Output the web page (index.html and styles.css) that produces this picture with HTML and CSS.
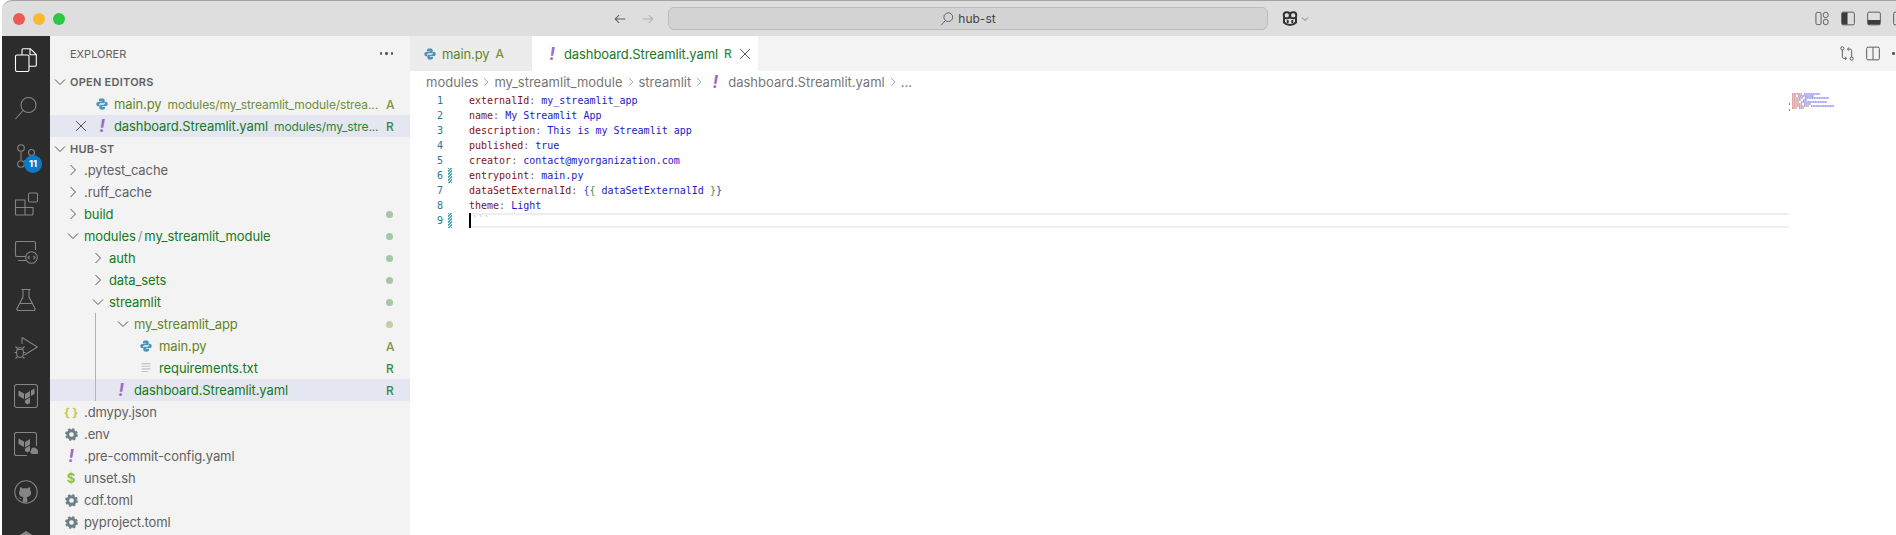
FILE: index.html
```html
<!DOCTYPE html>
<html lang="en">
<head>
<meta charset="utf-8">
<title>hub-st</title>
<link rel="stylesheet" href="styles.css">
</head>
<body>
<div class="window">
  <header class="titlebar">
    <div class="lights"><i class="light red"></i><i class="light yellow"></i><i class="light green"></i></div>
    <div class="nav">
      <svg class="navicon" viewBox="0 0 16 16"><path d="M14 8H2.500M7 3.500 2.500 8 7 12.500"/></svg>
      <svg class="navicon off" viewBox="0 0 16 16"><path d="M2 8h11.500M9 3.500 13.500 8 9 12.500"/></svg>
    </div>
    <div class="command">
      <svg class="cmdicon" viewBox="0 0 16 16"><circle cx="9.500" cy="6.500" r="5"/><path d="M6 10.500 1.500 15.500"/></svg>
      <span>hub-st</span>
    </div>
    <div class="copilot">
      <svg class="copicon" viewBox="0 0 18 18"><path d="M3 7.500v5c1.500 1.500 3.500 2.500 6 2.500s4.500-1 6-2.500v-5"/><rect x="2.800" y="2.200" width="6" height="6" rx="2.500"/><rect x="9.200" y="2.200" width="6" height="6" rx="2.500"/><rect class="eye" x="5.700" y="10" width="2" height="3.200" rx=".8"/><rect class="eye" x="10.300" y="10" width="2" height="3.200" rx=".8"/></svg>
      <svg class="copchev" viewBox="0 0 8 8"><path d="M1 2.500 4 5.500 7 2.500"/></svg>
    </div>
    <div class="layout-actions">
      <svg class="laicon" viewBox="0 0 15 15"><rect x="1" y="1" width="5.500" height="13" rx="1.500"/><rect x="9" y="1" width="5" height="5.500" rx="2"/><rect x="9" y="8.500" width="5" height="5.500" rx="2"/></svg>
      <svg class="laicon" viewBox="0 0 15 15"><rect x=".7" y=".7" width="13.600" height="13.600" rx="1.500"/><path class="solid" d="M1 2.200C1 1.500 1.500 1 2.200 1H7v13H2.200C1.500 14 1 13.500 1 12.800z"/></svg>
      <svg class="laicon" viewBox="0 0 15 15"><rect x=".7" y=".7" width="13.600" height="13.600" rx="1.500"/><path class="solid" d="M1 9h13v3.800c0 .7-.5 1.200-1.200 1.200H2.200C1.500 14 1 13.500 1 12.800z"/></svg>
      <svg class="laicon" viewBox="0 0 15 15"><rect x=".7" y=".7" width="13.600" height="13.600" rx="1.500"/></svg>
    </div>
  </header>

  <div class="workbench">
    <nav class="activity">
      <div class="act">
        <svg class="acticon active" viewBox="0 0 24 24"><rect x="1.500" y="7" width="13.500" height="16.500" rx="1.500"/><path d="M8 7V2c0-.8.500-1.300 1.300-1.300h7L22.300 6.500V17c0 .8-.5 1.300-1.300 1.300h-6M16 1v5.800h6"/></svg>
      </div>
      <div class="act">
        <svg class="acticon" viewBox="0 0 24 24"><circle cx="14.500" cy="9" r="7.500"/><path d="M9 14.500 1.500 23"/></svg>
      </div>
      <div class="act">
        <svg class="acticon" viewBox="0 0 24 24"><circle cx="7" cy="4" r="3.300"/><circle cx="17.500" cy="8.500" r="3"/><circle cx="7" cy="20" r="3.300"/><path d="M7 7.500v9M17.500 11.500c0 5-7 4-8 6.500"/></svg>
        <span class="badge">11</span>
      </div>
      <div class="act">
        <svg class="acticon" viewBox="0 0 24 24"><path d="M1.500 8h9.500v15H2.500a1 1 0 0 1-1-1zM1.500 15.500H19V22a1 1 0 0 1-1 1h-7"/><rect x="14.500" y="1" width="9" height="9" rx="1.500"/></svg>
      </div>
      <div class="act">
        <svg class="acticon" viewBox="0 0 24 24"><path d="M12 16.500H3a1.500 1.500 0 0 1-1.500-1.500V3A1.500 1.500 0 0 1 3 1.500h17A1.500 1.500 0 0 1 21.500 3v7M4 20.500h8"/><circle cx="17.500" cy="17.500" r="5.800"/><path d="M15.500 16l-1.500 1.500 1.500 1.500M19.500 16l1.500 1.500-1.500 1.500"/></svg>
      </div>
      <div class="act">
        <svg class="acticon" viewBox="0 0 24 24"><path d="M7.500 1.500h9M9 1.500V9L3 20.500c-.5 1 .2 2 1.300 2h15.400c1.100 0 1.800-1 1.300-2L15 9V1.500M6 15.500h12"/></svg>
      </div>
      <div class="act">
        <svg class="acticon" viewBox="0 0 24 24"><path d="M8 1.500 23.500 11 10.500 19M8 1.500V8"/><ellipse cx="6" cy="16.500" rx="3.500" ry="5"/><path d="M2.500 16.500H.5M9.500 16.500h2M3.500 12.500 1.500 10.500M8.500 12.500l2-2M3.500 20.500l-2 2M8.500 20.500l2 2M3 13.500h6"/></svg>
      </div>
      <div class="act">
        <svg class="acticon" viewBox="0 0 24 24"><rect x=".5" y=".5" width="23" height="23" rx="2.500"/><path class="fillgray" d="M4.500 6.500 10 9.500v5.500L4.500 12zM11 10l5-3v5.500l-5 3zM11 16.500l5-3v5.500l-2.500 1.500-2.500-1.500zM17 6.500l3.500-2v5.500L17 12z"/></svg>
      </div>
      <div class="act">
        <svg class="acticon" viewBox="0 0 24 24"><path d="M22.500 14V2.500a2 2 0 0 0-2-2H2.500a2 2 0 0 0-2 2v19a2 2 0 0 0 2 2H13"/><path class="fillgray" d="M4.500 6.500 10 9.500v5.500L4.500 12zM11 10l5-3v5.500l-5 3zM11 16.500l5-3v5.500l-2.500 1.500-2.500-1.500zM17 18.500a3 3 0 0 1 3-3 3 3 0 0 1 3 2 2.500 2.500 0 0 1 .5 4.500H18a2 2 0 0 1-1-3.500z"/></svg>
      </div>
      <div class="act">
        <svg class="acticon" viewBox="0 0 24 24"><circle cx="12" cy="12" r="11.200"/><path class="fillgray" d="M8.800 22.500v-3.600c-2.600.5-3.400-.9-3.900-2 .8.200 1.500.9 2 1.500.6.600 1.300.6 2 .3 0-.6.300-1.100.7-1.500-2.800-.4-4.600-1.700-4.600-4.500 0-1.100.4-2 1-2.800-.2-.7-.2-1.700.1-2.600 1.100 0 2 .5 2.900 1.200 1.300-.4 2.800-.4 4.100 0 .9-.7 1.800-1.200 2.900-1.200.3.900.3 1.900.1 2.600.6.800 1 1.700 1 2.800 0 2.800-1.800 4.100-4.600 4.500.5.500.8 1.100.8 1.900v3.400z"/></svg>
      </div>
      <div class="act">
        <svg class="acticon" viewBox="0 0 24 24"><path class="fillgray" d="M4 8l8-5 8 5v13H4z"/></svg>
      </div>
    </nav>

    <aside class="sidebar">
      <div class="side-head">
        <span class="side-title">EXPLORER</span>
        <span class="dots"><i></i><i></i><i></i></span>
      </div>
      <div class="section">
        <svg class="chev open" viewBox="0 0 16 16"><path d="M3 5.500 8 10.500 13 5.500"/></svg>
        <span>OPEN EDITORS</span>
      </div>
      <div class="row oe">
        <span class="closebox"></span>
        <span class="ficon oeicon"><svg class="py" viewBox="0 0 16 16"><path d="M8 1.500C5.500 1.500 4.500 2.500 4.500 3.800V5h3.700v.6H3.500C2.200 5.600 1.500 6.700 1.500 8s.7 2.500 2 2.500h1.300V9c0-1 .8-1.800 1.800-1.800h3c.9 0 1.500-.7 1.500-1.500V3.800c0-1.300-1.200-2.300-3.500-2.300z"/><path d="M8 14.500c2.500 0 3.500-1 3.500-2.300V11H7.800v-.6h4.700c1.300 0 2-1.100 2-2.400s-.7-2.500-2-2.500h-1.300V7c0 1-.8 1.800-1.800 1.800h-3c-.9 0-1.500.7-1.500 1.500v1.900c0 1.300 1.200 2.300 3.500 2.300z"/></svg></span>
        <span class="name added">main.py</span>
        <span class="desc added">modules/my_streamlit_module/strea...</span>
        <span class="git added">A</span>
      </div>
      <div class="row oe selected">
        <span class="closebox"><svg class="closex" viewBox="0 0 16 16"><path d="M3 3l10 10M13 3 3 13"/></svg></span>
        <span class="ficon oeicon bang">!</span>
        <span class="name renamed">dashboard.Streamlit.yaml</span>
        <span class="desc renamed">modules/my_stre...</span>
        <span class="git renamed">R</span>
      </div>
      <div class="section hub">
        <svg class="chev open" viewBox="0 0 16 16"><path d="M3 5.500 8 10.500 13 5.500"/></svg>
        <span>HUB-ST</span>
      </div>
      <div class="row l0"><svg class="chev" viewBox="0 0 16 16"><path d="M5.500 3 10.500 8 5.500 13"/></svg><span class="name">.pytest_cache</span></div>
      <div class="row l0"><svg class="chev" viewBox="0 0 16 16"><path d="M5.500 3 10.500 8 5.500 13"/></svg><span class="name">.ruff_cache</span></div>
      <div class="row l0"><svg class="chev" viewBox="0 0 16 16"><path d="M5.500 3 10.500 8 5.500 13"/></svg><span class="name renamed">build</span><i class="dot"></i></div>
      <div class="row l0"><svg class="chev" viewBox="0 0 16 16"><path d="M3 5.500 8 10.500 13 5.500"/></svg><span class="name renamed">modules<span class="sep">/</span>my_streamlit_module</span><i class="dot"></i></div>
      <div class="row l1"><svg class="chev" viewBox="0 0 16 16"><path d="M5.500 3 10.500 8 5.500 13"/></svg><span class="name renamed">auth</span><i class="dot"></i></div>
      <div class="row l1"><svg class="chev" viewBox="0 0 16 16"><path d="M5.500 3 10.500 8 5.500 13"/></svg><span class="name renamed">data_sets</span><i class="dot"></i></div>
      <div class="row l1"><svg class="chev" viewBox="0 0 16 16"><path d="M3 5.500 8 10.500 13 5.500"/></svg><span class="name renamed">streamlit</span><i class="dot"></i></div>
      <div class="group">
        <i class="guide"></i>
        <div class="row l2"><svg class="chev" viewBox="0 0 16 16"><path d="M3 5.500 8 10.500 13 5.500"/></svg><span class="name added">my_streamlit_app</span><i class="dot dot-added"></i></div>
        <div class="row l3"><span class="ficon"><svg class="py" viewBox="0 0 16 16"><path d="M8 1.500C5.500 1.500 4.500 2.500 4.500 3.800V5h3.700v.6H3.500C2.200 5.600 1.500 6.700 1.500 8s.7 2.500 2 2.500h1.300V9c0-1 .8-1.800 1.800-1.800h3c.9 0 1.500-.7 1.500-1.500V3.800c0-1.300-1.200-2.300-3.500-2.300z"/><path d="M8 14.500c2.500 0 3.500-1 3.500-2.300V11H7.800v-.6h4.700c1.300 0 2-1.100 2-2.400s-.7-2.500-2-2.500h-1.300V7c0 1-.8 1.800-1.800 1.800h-3c-.9 0-1.500.7-1.500 1.500v1.900c0 1.300 1.200 2.300 3.500 2.300z"/></svg></span><span class="name added">main.py</span><span class="git added">A</span></div>
        <div class="row l3"><span class="ficon"><svg class="txt" viewBox="0 0 16 16"><path d="M3 3h10M3 6h10M3 9h10M3 12h7"/></svg></span><span class="name renamed">requirements.txt</span><span class="git renamed">R</span></div>
        <div class="row l2 selected"><span class="ficon bang">!</span><span class="name renamed">dashboard.Streamlit.yaml</span><span class="git renamed">R</span></div>
      </div>
      <div class="row l0"><span class="ficon braces">{ }</span><span class="name">.dmypy.json</span></div>
      <div class="row l0"><span class="ficon"><svg class="gear" viewBox="0 0 16 16"><circle class="ring" cx="8" cy="8" r="4"/><circle class="teeth" cx="8" cy="8" r="5.800"/></svg></span><span class="name">.env</span></div>
      <div class="row l0"><span class="ficon bang">!</span><span class="name">.pre-commit-config.yaml</span></div>
      <div class="row l0"><span class="ficon dollar">$</span><span class="name">unset.sh</span></div>
      <div class="row l0"><span class="ficon"><svg class="gear" viewBox="0 0 16 16"><circle class="ring" cx="8" cy="8" r="4"/><circle class="teeth" cx="8" cy="8" r="5.800"/></svg></span><span class="name">cdf.toml</span></div>
      <div class="row l0"><span class="ficon"><svg class="gear" viewBox="0 0 16 16"><circle class="ring" cx="8" cy="8" r="4"/><circle class="teeth" cx="8" cy="8" r="5.800"/></svg></span><span class="name">pyproject.toml</span></div>
    </aside>

    <main class="editor">
      <div class="tabs">
        <div class="tab inactive">
          <span class="ficon"><svg class="py" viewBox="0 0 16 16"><path d="M8 1.500C5.500 1.500 4.500 2.500 4.500 3.800V5h3.700v.6H3.500C2.200 5.600 1.500 6.700 1.500 8s.7 2.500 2 2.500h1.300V9c0-1 .8-1.800 1.800-1.800h3c.9 0 1.500-.7 1.500-1.500V3.800c0-1.300-1.200-2.300-3.500-2.300z"/><path d="M8 14.500c2.500 0 3.500-1 3.500-2.300V11H7.800v-.6h4.700c1.300 0 2-1.100 2-2.400s-.7-2.500-2-2.500h-1.300V7c0 1-.8 1.800-1.800 1.800h-3c-.9 0-1.500.7-1.500 1.500v1.900c0 1.300 1.200 2.300 3.500 2.300z"/></svg></span>
          <span class="name added">main.py</span>
          <span class="tabgit added">A</span>
        </div>
        <div class="tab current">
          <span class="ficon bang">!</span>
          <span class="name renamed">dashboard.Streamlit.yaml</span>
          <span class="tabgit renamed">R</span>
          <svg class="closex tabx" viewBox="0 0 16 16"><path d="M3 3l10 10M13 3 3 13"/></svg>
        </div>
        <div class="tab-actions">
          <svg class="taicon" viewBox="0 0 15 15"><circle cx="2.500" cy="2" r="1.700"/><circle cx="12.500" cy="13" r="1.700"/><path d="M2.500 3.700V11c0 1 .5 1.700 1.700 1.700h2.300M5.500 11l1.500 1.700L5.500 14.400M12.500 11.300V4.500c0-1-.5-1.700-1.700-1.700H8.500M9.500 1l-1.500 1.800 1.500 1.700"/></svg>
          <svg class="taicon" viewBox="0 0 15 15"><rect x=".7" y=".7" width="13.600" height="13.600" rx="1.500"/><path d="M7.500 1v13"/></svg>
          <span class="dots"><i></i><i></i><i></i></span>
        </div>
      </div>
      <div class="crumbs">
        <span>modules</span><svg class="crumbchev" viewBox="0 0 16 16"><path d="M5.500 3 10.500 8 5.500 13"/></svg>
        <span>my_streamlit_module</span><svg class="crumbchev" viewBox="0 0 16 16"><path d="M5.500 3 10.500 8 5.500 13"/></svg>
        <span>streamlit</span><svg class="crumbchev" viewBox="0 0 16 16"><path d="M5.500 3 10.500 8 5.500 13"/></svg>
        <span class="ficon bang crumbbang">!</span>
        <span>dashboard.Streamlit.yaml</span><svg class="crumbchev" viewBox="0 0 16 16"><path d="M5.500 3 10.500 8 5.500 13"/></svg>
        <span>...</span>
      </div>
      <div class="code-area">
        <div class="code">
          <div class="line"><span class="num">1</span><span class="deco"></span><span class="src"><b class="k">externalId</b>: <b class="v">my_streamlit_app</b></span></div>
          <div class="line"><span class="num">2</span><span class="deco"></span><span class="src"><b class="k">name</b>: <b class="v">My Streamlit App</b></span></div>
          <div class="line"><span class="num">3</span><span class="deco"></span><span class="src"><b class="k">description</b>: <b class="v">This is my Streamlit app</b></span></div>
          <div class="line"><span class="num">4</span><span class="deco"></span><span class="src"><b class="k">published</b>: <b class="v">true</b></span></div>
          <div class="line"><span class="num">5</span><span class="deco"></span><span class="src"><b class="k">creator</b>: <b class="v">contact@myorganization.com</b></span></div>
          <div class="line"><span class="num">6</span><span class="deco mod"></span><span class="src"><b class="k">entrypoint</b>: <b class="v">main.py</b></span></div>
          <div class="line"><span class="num">7</span><span class="deco"></span><span class="src"><b class="k">dataSetExternalId</b>: <b class="b1">{</b><b class="b2">{</b> <b class="v">dataSetExternalId</b> <b class="b2">}</b><b class="b1">}</b></span></div>
          <div class="line"><span class="num">8</span><span class="deco"></span><span class="src"><b class="k">theme</b>: <b class="v">Light</b></span></div>
          <div class="line"><span class="num">9</span><span class="deco mod"></span><span class="src current-line"><i class="cursor"></i><b class="ghost">```</b></span></div>
        </div>
        <svg class="minimap" width="48" height="20" viewBox="0 0 48 20">
          <path class="mk" d="M3 1h10M3 3h4M3 5h11M3 7h9M3 9h7M3 11h10M3 13h17M3 15h5"/>
          <path class="mv" d="M15 1h16M9 3h16M16 5h24M14 7h4M12 9h26M15 11h7M22 13h23M10 15h5"/>
          <path class="md" d="M.5 10v2M.5 16v2"/>
        </svg>
      </div>
    </main>
  </div>
</div>
</body>
</html>
```
FILE: styles.css
```css
* { box-sizing: border-box; }
html, body { margin: 0; height: 100%; }
body {
  width: 1896px;
  height: 535px;
  overflow: hidden;
  background: #fff;
  font-family: "Inter", "Liberation Sans", sans-serif;
  font-size: 13px;
  color: #616161;
}
svg { display: block; flex: none; }
.window {
  margin-left: 2px;
  height: 535px;
  display: flex;
  flex-direction: column;
  overflow: hidden;
}

/* title bar */
.titlebar {
  height: 36px;
  flex: none;
  display: flex;
  align-items: center;
  background: #dedede;
  border-top: 1px solid #a3a3a3;
  border-top-left-radius: 10px;
  padding-left: 11px;
}
.lights { display: flex; gap: 8px; width: 599px; flex: none; }
.light { width: 12px; height: 12px; border-radius: 50%; }
.red { background: #ee5b57; }
.yellow { background: #fbb92d; }
.green { background: #2cc83f; }
.nav { display: flex; gap: 14px; width: 56px; flex: none; padding-left: 1px; }
.navicon { width: 14px; height: 14px; fill: none; stroke: #5c5c5c; stroke-width: 1.200; }
.navicon.off { stroke: #b0b0b0; }
.command {
  width: 600px;
  height: 23px;
  flex: none;
  background: #d3d3d3;
  border: 1px solid #bdbdbd;
  border-radius: 6px;
  display: flex;
  align-items: center;
  justify-content: center;
  gap: 4px;
  font-size: 12px;
  color: #444;
}
.cmdicon { width: 14px; height: 15px; fill: none; stroke: #555; stroke-width: 1; }
.copilot { display: flex; align-items: center; gap: 2px; margin-left: 13px; flex: none; }
.copicon { width: 18px; height: 18px; fill: none; stroke: #333; stroke-width: 2; }
.copicon .eye { fill: #333; stroke: none; }
.copchev { width: 8px; height: 8px; fill: none; stroke: #666; stroke-width: .8; }
.layout-actions { display: flex; gap: 12px; margin-left: 506px; flex: none; }
.laicon { width: 14px; height: 15px; fill: none; stroke: #555; stroke-width: 1; }
.laicon .solid { fill: #3c3c3c; stroke: none; }

.workbench { flex: 1; min-height: 0; display: flex; }

/* activity bar */
.activity { width: 48px; flex: none; background: #2c2c2c; overflow: hidden; }
.act { height: 48px; display: flex; align-items: center; justify-content: center; position: relative; }
.acticon { width: 24px; height: 24px; fill: none; stroke: #858585; stroke-width: 1.100; }
.acticon.active { stroke: #fff; }
.acticon .fillgray { fill: #858585; stroke: none; }
.badge {
  position: absolute;
  left: 22px;
  top: 23px;
  width: 18px;
  height: 18px;
  border-radius: 50%;
  background: #0a7ac8;
  color: #fff;
  font-size: 9.500px;
  font-weight: 700;
  line-height: 18px;
  text-align: center;
}

/* sidebar */
.sidebar { width: 360px; flex: none; background: #f3f3f3; overflow: hidden; }
.side-head { height: 35px; display: flex; align-items: center; justify-content: space-between; padding: 0 17px 0 20px; }
.side-title { font-size: 11px; }
.dots { display: flex; gap: 3px; }
.dots i { width: 2.500px; height: 2.500px; border-radius: 50%; background: #555; }
.section {
  height: 22px;
  display: flex;
  align-items: center;
  padding-left: 2px;
  font-size: 11px;
  font-weight: 600;
  letter-spacing: .25px;
  color: #616161;
}
.section.hub { padding-top: 1px; }
.section .chev { margin-right: 2px; }
.chev { width: 16px; height: 16px; fill: none; stroke: #555; stroke-width: 1; margin-right: 3px; }
.row { height: 22px; display: flex; align-items: center; padding-right: 16px; white-space: nowrap; }
.row.selected { background: #e4e6f1; }
.l0 { padding-left: 15px; }
.l1 { padding-left: 40px; }
.l2 { padding-left: 65px; }
.l3 { padding-left: 90px; }
.oe { padding-left: 23px; }
.closebox { width: 16px; height: 16px; margin-right: 5px; flex: none; }
.closex { width: 16px; height: 16px; fill: none; stroke: #555; stroke-width: 1; }
.ficon {
  width: 16px;
  height: 16px;
  flex: none;
  margin-left: -2px;
  margin-right: 5px;
  display: flex;
  align-items: center;
  justify-content: center;
}
.oeicon { margin-left: 0; margin-right: 4px; }
.py { width: 14px; height: 14px; fill: #4f94b6; }
.txt { width: 14px; height: 14px; fill: none; stroke: #c4c4c4; stroke-width: 1.300; }
.gear { width: 15px; height: 15px; fill: none; }
.gear .ring { stroke: #6d8086; stroke-width: 3; }
.gear .teeth { stroke: #6d8086; stroke-width: 2; stroke-dasharray: 2.500 2.060; }
.bang { color: #9a6cc4; font-weight: 700; font-style: italic; font-size: 17px; }
.braces { color: #c2c64f; font-size: 12px; font-weight: 700; }
.dollar { color: #8dc149; font-size: 13px; font-weight: 700; }
.name { flex: none; letter-spacing: -.1px; }
.desc {
  flex: none;
  margin-left: 6px;
  font-size: 12px;
  letter-spacing: -.1px;
  opacity: .9;
}
.added { color: #64841f; }
.renamed { color: #137a1d; }
.git { flex: none; margin-left: auto; width: 10px; font-size: 12px; font-weight: 500; padding-left: 2px; opacity: .85; }
.sep { margin: 0 2px; color: #8a9a8a; }
.dot { margin-left: auto; width: 7px; height: 7px; border-radius: 50%; background: #a4c7a6; margin-right: 1px; }
.dot-added { background: #c2cfa6; }
.group { position: relative; }
.guide { position: absolute; left: 45px; top: 0; bottom: 0; width: 1px; background: #b2b2b2; z-index: 1; }

/* editor */
.editor { flex: 1; min-width: 0; background: #fff; display: flex; flex-direction: column; }
.tabs { height: 35px; flex: none; display: flex; align-items: center; background: #f3f3f3; }
.tab { height: 35px; display: flex; align-items: center; flex: none; }
.tab .ficon { margin-left: 0; margin-right: 4px; }
.inactive { width: 122px; background: #ececec; padding-left: 12px; }
.current { width: 226px; background: #fff; padding-left: 12px; }
.tabgit { font-size: 12px; margin-left: 6px; font-weight: 500; opacity: .85; }
.tabx { margin-left: 5px; }
.tab-actions { margin-left: auto; display: flex; align-items: center; gap: 12px; width: 56px; flex: none; overflow: hidden; }
.taicon { width: 14px; height: 15px; fill: none; stroke: #555; stroke-width: 1; }
.crumbs { height: 22px; flex: none; display: flex; align-items: center; padding-left: 16px; color: #777; white-space: nowrap; }
.crumbchev { width: 12px; height: 12px; margin: 0 2px; fill: none; stroke: #888; stroke-width: 1.100; }
.crumbbang { margin: 0 5px 0 0; font-size: 17px; }
.code-area { flex: 1; display: flex; align-items: flex-start; }
.code { flex: 1; min-width: 0; font-family: "DejaVu Sans Mono", "Liberation Mono", monospace; font-size: 10px; line-height: 15px; }
.line { display: flex; height: 15px; white-space: pre; }
.num { width: 33px; flex: none; text-align: right; color: #237893; font-size: 10px; }
.deco { width: 4px; flex: none; margin-left: 5px; }
.deco.mod {
  background: linear-gradient(135deg, #4aa3b0 25%, transparent 25% 50%, #4aa3b0 50% 75%, transparent 75%) 0 0 / 3px 3px;
}
.src { margin-left: 17px; flex: 1; }
.src b { font-weight: 400; }
.k { color: #7d1515; }
.v { color: #1a1ac8; }
.b1 { color: #2a48d8; }
.b2 { color: #3a933a; }
.current-line {
  position: relative;
  border-top: 2px solid #eee;
  border-bottom: 2px solid #eee;
  line-height: 11px;
}
.cursor { position: absolute; left: 0; top: -2px; width: 2px; height: 15px; background: #000; }
.ghost { color: #bbb; margin-left: 3px; }
.minimap { flex: none; margin-right: 59px; fill: none; stroke-width: 1.600; }
.mk { stroke: #d08c8c; stroke-dasharray: 1.400 .3; }
.mv { stroke: #8c8cee; stroke-dasharray: 1.400 .3; }
.md { stroke: #3f9bb0; stroke-width: 1; }
```
